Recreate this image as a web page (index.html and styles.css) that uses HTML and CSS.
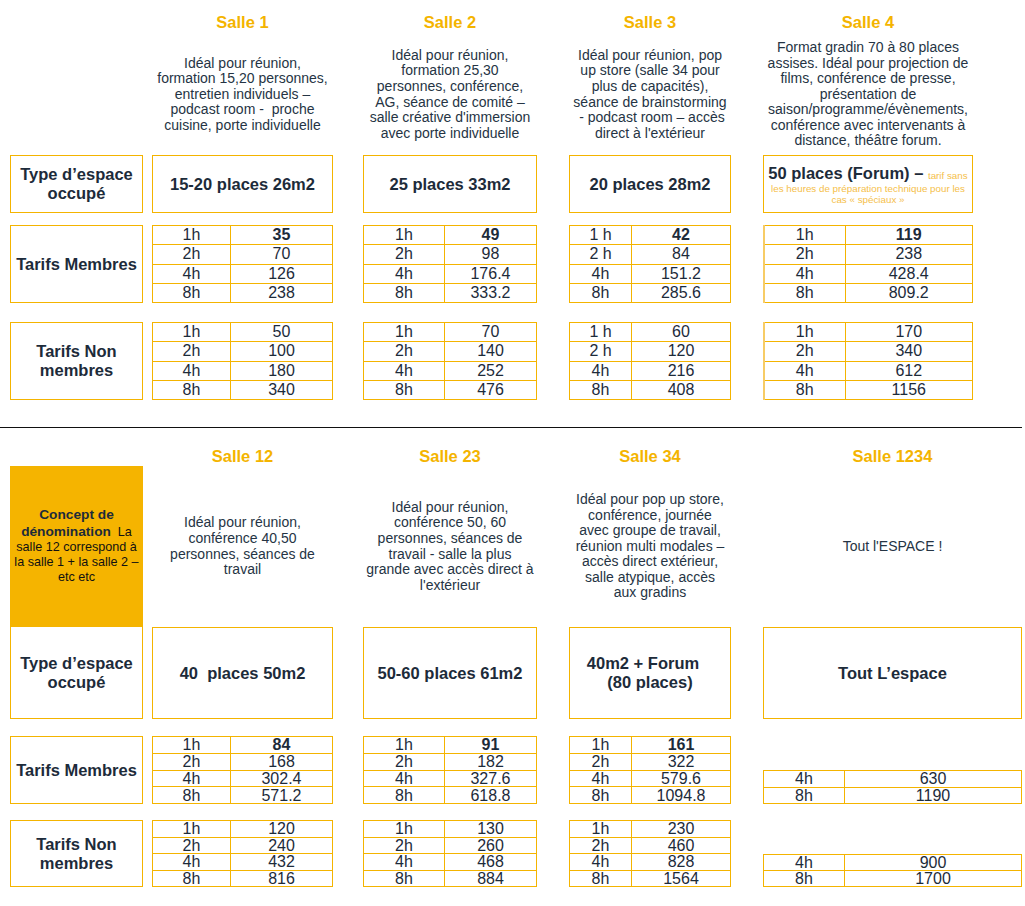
FILE: index.html
```html
<!DOCTYPE html>
<html lang="fr">
<head>
<meta charset="utf-8">
<title>Tarifs des salles</title>
<link rel="stylesheet" href="styles.css">
</head>
<body>
<section class="block top">
  <div class="row titles">
    <div class="c0"></div>
    <div class="c1 title">Salle 1</div>
    <div class="c2 title">Salle 2</div>
    <div class="c3 title">Salle 3</div>
    <div class="c4 title narrow">Salle 4</div>
  </div>
  <div class="row descs">
    <div class="c0"></div>
    <div class="c1 desc"><p>Idéal pour réunion,<br>formation 15,20 personnes,<br>entretien individuels –<br>podcast room -&nbsp; proche<br>cuisine, porte individuelle</p></div>
    <div class="c2 desc"><p>Idéal pour réunion,<br>formation 25,30<br>personnes, conférence,<br>AG, séance de comité –<br>salle créative d'immersion<br>avec porte individuelle</p></div>
    <div class="c3 desc"><p>Idéal pour réunion, pop<br>up store (salle 34 pour<br>plus de capacités),<br>séance de brainstorming<br>&nbsp;- podcast room – accès<br>direct à l'extérieur</p></div>
    <div class="c4 desc narrow"><p>Format gradin 70 à 80 places<br>assises. Idéal pour projection de<br>films, conférence de presse,<br>présentation de<br>saison/programme/évènements,<br>conférence avec intervenants à<br>distance, théâtre forum.</p></div>
  </div>
  <div class="row types">
    <div class="c0 box label">Type d’espace<br>occupé</div>
    <div class="c1 box">15-20 places 26m2</div>
    <div class="c2 box">25 places 33m2</div>
    <div class="c3 box">20 places 28m2</div>
    <div class="c4 box narrow forum"><p><span class="big">50 places (Forum) – </span><span class="note">tarif sans<br>les heures de préparation technique pour les<br>cas « spéciaux »</span></p></div>
  </div>
  <div class="row prices tall members">
    <div class="c0 box label">Tarifs Membres</div>
    <div class="c1"><table class="price w78"><tr><td>1h</td><td class="b">35</td></tr><tr><td>2h</td><td>70</td></tr><tr><td>4h</td><td>126</td></tr><tr><td>8h</td><td>238</td></tr></table></div>
    <div class="c2"><table class="price w81"><tr><td>1h</td><td class="b">49</td></tr><tr><td>2h</td><td>98</td></tr><tr><td>4h</td><td>176.4</td></tr><tr><td>8h</td><td>333.2</td></tr></table></div>
    <div class="c3"><table class="price w62"><tr><td>1 h</td><td class="b">42</td></tr><tr><td>2 h</td><td>84</td></tr><tr><td>4h</td><td>151.2</td></tr><tr><td>8h</td><td>285.6</td></tr></table></div>
    <div class="c4 narrow"><table class="price w81 soft"><tr><td>1h</td><td class="b">119</td></tr><tr><td>2h</td><td>238</td></tr><tr><td>4h</td><td>428.4</td></tr><tr><td>8h</td><td>809.2</td></tr></table></div>
  </div>
  <div class="row prices tall nonmembers">
    <div class="c0 box label">Tarifs Non<br>membres</div>
    <div class="c1"><table class="price w78"><tr><td>1h</td><td>50</td></tr><tr><td>2h</td><td>100</td></tr><tr><td>4h</td><td>180</td></tr><tr><td>8h</td><td>340</td></tr></table></div>
    <div class="c2"><table class="price w81"><tr><td>1h</td><td>70</td></tr><tr><td>2h</td><td>140</td></tr><tr><td>4h</td><td>252</td></tr><tr><td>8h</td><td>476</td></tr></table></div>
    <div class="c3"><table class="price w62"><tr><td>1 h</td><td>60</td></tr><tr><td>2 h</td><td>120</td></tr><tr><td>4h</td><td>216</td></tr><tr><td>8h</td><td>408</td></tr></table></div>
    <div class="c4 narrow"><table class="price w81 soft"><tr><td>1h</td><td>170</td></tr><tr><td>2h</td><td>340</td></tr><tr><td>4h</td><td>612</td></tr><tr><td>8h</td><td>1156</td></tr></table></div>
  </div>
</section>

<div class="sep"></div>

<section class="block bottom">
  <div class="row titles">
    <div class="c0"></div>
    <div class="c1 title">Salle 12</div>
    <div class="c2 title">Salle 23</div>
    <div class="c3 title">Salle 34</div>
    <div class="c4 title">Salle 1234</div>
  </div>
  <div class="row descs">
    <div class="c0 concept"><p><strong>Concept de dénomination</strong>&nbsp; La salle 12 correspond à la salle 1 + la salle 2 – etc etc</p></div>
    <div class="c1 desc"><p>Idéal pour réunion,<br>conférence 40,50<br>personnes, séances de<br>travail</p></div>
    <div class="c2 desc"><p>Idéal pour réunion,<br>conférence 50, 60<br>personnes, séances de<br>travail - salle la plus<br>grande avec accès direct à<br>l'extérieur</p></div>
    <div class="c3 desc"><p>Idéal pour pop up store,<br>conférence, journée<br>avec groupe de travail,<br>réunion multi modales –<br>accès direct extérieur,<br>salle atypique, accès<br>aux gradins</p></div>
    <div class="c4 desc"><p>Tout l'ESPACE !</p></div>
  </div>
  <div class="row types">
    <div class="c0 box label joined">Type d’espace<br>occupé</div>
    <div class="c1 box">40&nbsp; places 50m2</div>
    <div class="c2 box">50-60 places 61m2</div>
    <div class="c3 box"><p><span class="shift">40m2 + Forum</span><br>(80 places)</p></div>
    <div class="c4 box">Tout L’espace</div>
  </div>
  <div class="row prices short members">
    <div class="c0 box label">Tarifs Membres</div>
    <div class="c1"><table class="price w78"><tr><td>1h</td><td class="b">84</td></tr><tr><td>2h</td><td>168</td></tr><tr><td>4h</td><td>302.4</td></tr><tr><td>8h</td><td>571.2</td></tr></table></div>
    <div class="c2"><table class="price w81"><tr><td>1h</td><td class="b">91</td></tr><tr><td>2h</td><td>182</td></tr><tr><td>4h</td><td>327.6</td></tr><tr><td>8h</td><td>618.8</td></tr></table></div>
    <div class="c3"><table class="price w62"><tr><td>1h</td><td class="b">161</td></tr><tr><td>2h</td><td>322</td></tr><tr><td>4h</td><td>579.6</td></tr><tr><td>8h</td><td>1094.8</td></tr></table></div>
    <div class="c4 half"><table class="price w81"><tr><td>4h</td><td>630</td></tr><tr><td>8h</td><td>1190</td></tr></table></div>
  </div>
  <div class="row prices short nonmembers">
    <div class="c0 box label">Tarifs Non<br>membres</div>
    <div class="c1"><table class="price w78"><tr><td>1h</td><td>120</td></tr><tr><td>2h</td><td>240</td></tr><tr><td>4h</td><td>432</td></tr><tr><td>8h</td><td>816</td></tr></table></div>
    <div class="c2"><table class="price w81"><tr><td>1h</td><td>130</td></tr><tr><td>2h</td><td>260</td></tr><tr><td>4h</td><td>468</td></tr><tr><td>8h</td><td>884</td></tr></table></div>
    <div class="c3"><table class="price w62"><tr><td>1h</td><td>230</td></tr><tr><td>2h</td><td>460</td></tr><tr><td>4h</td><td>828</td></tr><tr><td>8h</td><td>1564</td></tr></table></div>
    <div class="c4 half"><table class="price w81"><tr><td>4h</td><td>900</td></tr><tr><td>8h</td><td>1700</td></tr></table></div>
  </div>
</section>
</body>
</html>
```

FILE: styles.css
```css
* { box-sizing: border-box; }

html, body {
  margin: 0;
  padding: 0;
  background: #ffffff;
}

body {
  font-family: "Liberation Sans", Arial, sans-serif;
  color: #1d2b3a;
  min-height: 906px;
}

p { margin: 0; }

.block {
  padding-left: 10px;
  width: 1022px;
}

.row {
  display: grid;
  grid-template-columns: 133px 190px 204px 194px 291px;
}

.c1 { margin-left: 9px; }
.c2 { margin-left: 30px; }
.c3 { margin-left: 32px; }
.c4 { margin-left: 32px; }
.narrow { width: 210px; }

/* titles */
.title {
  color: #f4b400;
  font-weight: bold;
  font-size: 16.5px;
  line-height: 20px;
  text-align: center;
}
.top .titles { height: 34px; padding-top: 12px; }
.bottom .titles { height: 38px; padding-top: 18px; }

/* descriptions */
.top .descs { height: 121px; }
.bottom .descs { height: 161px; }

.desc {
  display: flex;
  flex-direction: column;
  justify-content: center;
  align-items: center;
  text-align: center;
  font-size: 14px;
  line-height: 15.6px;
  color: #253444;
  white-space: nowrap;
}

.concept {
  background: #f5b400;
  border: 1px solid #f4b400;
  display: flex;
  align-items: center;
  justify-content: center;
  text-align: center;
  padding: 0 3px;
  font-size: 12.6px;
  line-height: 15.2px;
  color: #111111;
}
.concept strong {
  font-size: 13.7px;
  line-height: 15.2px;
  color: #1d2b3a;
}

/* boxes */
.box {
  border: 1px solid #f4b400;
  display: flex;
  align-items: center;
  justify-content: center;
  text-align: center;
  font-weight: bold;
  font-size: 16.5px;
  line-height: 19px;
  color: #1d2b3a;
}
.label { padding: 0 2px; }
.joined { border-top: 0; }

.top .types { height: 58px; }
.bottom .types { height: 92px; }

.forum {
  white-space: nowrap;
  padding: 0 3px;
}
.forum p {
  font-size: 9.8px;
  line-height: 11.5px;
}
.forum .big {
  font-size: 16.5px;
  line-height: 20px;
}
.note {
  font-weight: normal;
  font-size: 9.8px;
  line-height: 11.5px;
  color: #f5c04a;
}
.shift { padding-right: 14px; }

/* price tables */
.tall { height: 78px; }
.top .members { margin-top: 12px; }
.top .nonmembers { margin-top: 19px; }
.bottom .members { margin-top: 17px; height: 68px; }
.bottom .nonmembers { margin-top: 16px; height: 67px; }

.price {
  width: 100%;
  height: 100%;
  border-collapse: collapse;
  font-size: 16px;
  line-height: 16px;
  color: #1d2b3a;
}
.short .price { line-height: 15px; }
.price td {
  border: 1px solid #f4b400;
  padding: 0;
  text-align: center;
  vertical-align: middle;
}
.price .b { font-weight: bold; }
.w78 td:first-child { width: 78px; }
.w81 td:first-child { width: 81px; }
.w62 td:first-child { width: 62px; }
.soft td:first-child { border-left-color: #f7cc66; border-left-width: 2px; }

.half {
  display: flex;
  align-items: flex-end;
}
.half .price { height: 50%; }

/* separator */
.sep {
  width: 1022px;
  height: 1px;
  background: #111111;
  margin-top: 27px;
}
```
